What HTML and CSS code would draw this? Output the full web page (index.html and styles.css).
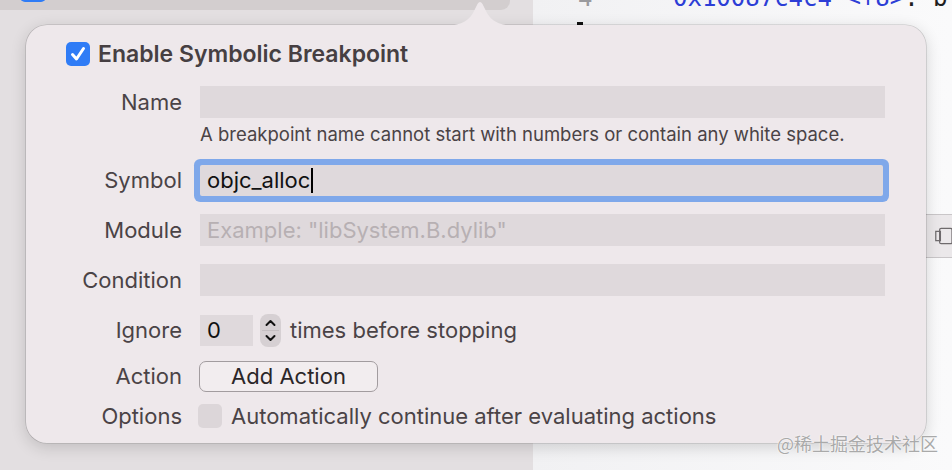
FILE: index.html
```html
<!DOCTYPE html>
<html>
<head>
<meta charset="utf-8">
<link rel="stylesheet" href="styles.css">
</head>
<body>
<div class="screen">
  <div class="sidebar">
    <div class="topbar"><span class="mini-check"></span></div>
  </div>
  <div class="editor">
    <div class="code-line"><span class="ln">4</span><span class="code"><span class="hex">0x10087c4c4 &lt;+8&gt;</span>: b</span></div>
    <div class="caret-mark"></div>
    <div class="toolbar">
      <svg class="split-icon" width="22" height="22" viewBox="0 0 22 22">
        <rect x="1" y="5" width="6" height="12" fill="none" stroke="#6f6b6d" stroke-width="1.6"/>
        <rect x="6" y="1" width="16" height="20" rx="2" fill="none" stroke="#6f6b6d" stroke-width="1.6"/>
      </svg>
    </div>
  </div>

  <div class="popover">
    <svg class="arrow" width="80" height="26" viewBox="0 0 80 26">
      <path d="M0,26 C18,26 27,23 33,13 L37.5,4 Q40,0 42.5,4 L47,13 C53,23 62,26 80,26 Z" fill="#eee8eb"/>
    </svg>
    <div class="title-row">
      <span class="checkbox checked">
        <svg width="24" height="24" viewBox="0 0 24 24"><path d="M6.5 12.5 L10.5 17 L17.5 6.5" fill="none" stroke="#fff" stroke-width="3" stroke-linecap="round" stroke-linejoin="round"/></svg>
      </span>
      <span class="title">Enable Symbolic Breakpoint</span>
    </div>

    <div class="row row-first">
      <span class="label">Name</span>
      <span class="field"></span>
    </div>
    <div class="hint">A breakpoint name cannot start with numbers or contain any white space.</div>

    <div class="row row-symbol">
      <span class="label">Symbol</span>
      <span class="field focused"><span class="value">objc_alloc</span><span class="caret"></span></span>
    </div>

    <div class="row">
      <span class="label">Module</span>
      <span class="field"><span class="placeholder">Example: "libSystem.B.dylib"</span></span>
    </div>

    <div class="row">
      <span class="label">Condition</span>
      <span class="field"></span>
    </div>

    <div class="row">
      <span class="label">Ignore</span>
      <span class="field small"><span class="value">0</span></span>
      <span class="stepper">
        <svg width="21" height="33" viewBox="0 0 21 33">
          <path d="M6.5 11 L10.5 7 L14.5 11" fill="none" stroke="#111" stroke-width="2" stroke-linecap="round" stroke-linejoin="round"/>
          <line x1="2" y1="16.5" x2="19" y2="16.5" stroke="#c4bec1" stroke-width="1"/>
          <path d="M6.5 22 L10.5 26 L14.5 22" fill="none" stroke="#111" stroke-width="2" stroke-linecap="round" stroke-linejoin="round"/>
        </svg>
      </span>
      <span class="after">times before stopping</span>
    </div>

    <div class="row row-action">
      <span class="label">Action</span>
      <span class="button">Add Action</span>
    </div>

    <div class="row row-options">
      <span class="label">Options</span>
      <span class="checkbox unchecked"></span>
      <span class="after option-text">Automatically continue after evaluating actions</span>
    </div>
  </div>

  <div class="watermark">@稀土掘金技术社区</div>
</div>
</body>
</html>
```

FILE: styles.css
```css
* { box-sizing: border-box; }
html, body { margin: 0; padding: 0; }
body {
  width: 952px;
  height: 470px;
  overflow: hidden;
  font-family: Inter, "Noto Sans", sans-serif;
  background: #ffffff;
}
.screen {
  position: relative;
  width: 952px;
  height: 470px;
  display: grid;
  grid-template-columns: 533px 1fr;
  overflow: hidden;
}
.sidebar {
  background: #e3dfe1;
}
.topbar {
  width: 510px;
  height: 10px;
  background: #d3cecf;
  border-bottom-right-radius: 9px;
  position: relative;
}
.mini-check {
  position: absolute;
  left: 20px;
  top: -22px;
  width: 26px;
  height: 24px;
  border-radius: 5px;
  background: #2f7cf6;
}
.editor {
  background: linear-gradient(90deg, #f1f1f3 0%, #fafafb 100%);
  overflow: hidden;
}
.code-line {
  margin-top: -14px;
  height: 24px;
  line-height: 24px;
  font-family: "DejaVu Sans Mono", "Liberation Mono", monospace;
  font-size: 24px;
  display: flex;
  white-space: nowrap;
}
.ln {
  color: #9a9a9e;
  margin-left: 45px;
  width: 95px;
}
.code { color: #1f1f1f; }
.hex { color: #2d3ed6; }
.caret-mark {
  margin-top: 12px;
  margin-left: 44px;
  width: 6px;
  height: 3px;
  background: #111;
}
.toolbar {
  margin-top: 189px;
  height: 44px;
  border-top: 1.5px solid #c9c6c8;
  border-bottom: 1.5px solid #c9c6c8;
  background: #ebe8ea;
  display: flex;
  align-items: center;
  padding-left: 402px;
}

/* Popover */
.popover {
  position: absolute;
  left: 26px;
  top: 25px;
  width: 900px;
  height: 418px;
  background: #eee8eb;
  border-radius: 21px;
  padding: 17px 41px 0 0;
  box-shadow: 0 0 0 0.6px rgba(0,0,0,0.18), 0 4px 16px rgba(0,0,0,0.16);
  color: #4a4346;
  font-size: 22px;
}
.arrow {
  position: absolute;
  left: 414px;
  top: -25px;
  display: block;
}
.title-row {
  display: flex;
  align-items: center;
  height: 24px;
  margin-left: 40px;
  gap: 8px;
}
.checkbox {
  width: 24px;
  height: 24px;
  border-radius: 5px;
  flex: none;
  display: block;
}
.checkbox svg { display: block; }
.checkbox.checked { background: #2f7cf6; }
.checkbox.unchecked { background: #dcd6d9; margin-left: -2px; }
.title {
  font-weight: 600;
  font-size: 23px;
  color: #463f42;
}
.row {
  display: flex;
  align-items: center;
  height: 32px;
  margin-top: 18px;
}
.row-first { margin-top: 20px; }
.row-symbol { margin-top: 20px; }
.row-action { margin-top: 14px; }
.row-options { margin-top: 8px; }
.label {
  width: 156px;
  margin-right: 18px;
  text-align: right;
  flex: none;
  color: #4a4346;
}
.field {
  flex: 1;
  height: 32px;
  background: #dfd9dc;
  display: flex;
  align-items: center;
  padding-left: 7px;
}
.field.focused {
  height: 31px;
  margin-right: 2px;
  border-radius: 2px;
  box-shadow: 0 0 0 6px #7fa8ea;
}
.field.small {
  flex: none;
  width: 53px;
  height: 31px;
}
.value { color: #111; }
.caret {
  width: 2px;
  height: 25px;
  background: #000;
  margin-left: 1px;
}
.placeholder { color: #b7b0b3; }
.hint {
  margin-top: 6px;
  margin-left: 174px;
  font-size: 18.5px;
  line-height: 20px;
  color: #4a4346;
}
.stepper {
  margin-left: 7px;
  width: 21px;
  height: 33px;
  border-radius: 8px;
  background: #d6d0d3;
  flex: none;
}
.stepper svg { display: block; }
.after {
  margin-left: 9px;
  color: #4a4346;
}
.option-text { margin-left: 9px; }
.button {
  width: 179px;
  height: 31px;
  margin-left: -1px;
  border: 1.5px solid #a29c9f;
  border-radius: 7px;
  background: #f2edef;
  display: flex;
  align-items: center;
  justify-content: center;
  color: #2b2628;
}
.watermark {
  position: absolute;
  left: 777px;
  top: 431px;
  font-family: "Noto Sans CJK SC", sans-serif;
  font-size: 18px;
  line-height: 24px;
  color: #a9a9a9;
  text-shadow: 0 0 2px #fff, 0 0 1px #fff;
}
```
